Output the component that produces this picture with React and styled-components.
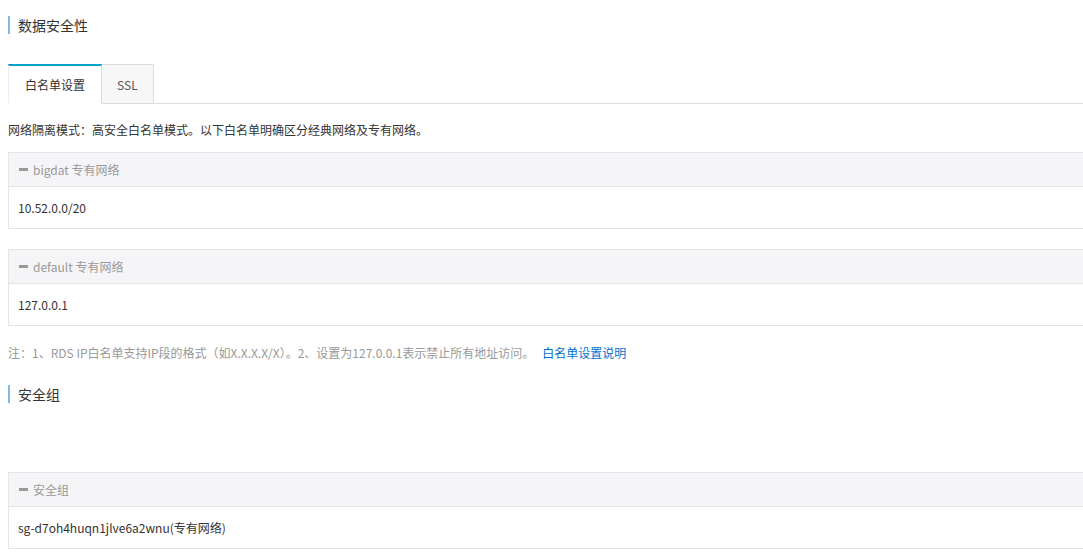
import React from 'react';
import styled, { createGlobalStyle } from 'styled-components';

const GlobalStyle = createGlobalStyle`
  html, body {
    margin: 0;
    padding: 0;
    background: #fff;
    overflow: hidden;
  }
  body {
    font-family: "Noto Sans CJK SC", "Noto Sans", sans-serif;
    font-size: 12px;
    color: #333;
  }
`;

const Page = styled.div`
  width: 1110px;
  padding: 16px 0 0 8px;
  box-sizing: border-box;
`;

const SectionTitle = styled.h3`
  margin: 0;
  font-size: 14px;
  font-weight: normal;
  line-height: 18px;
  color: #333;
  border-left: 2px solid #88b7e0;
  padding-left: 8px;
  margin-top: ${p => p.top || 0}px;
`;

const TabBar = styled.div`
  display: flex;
  margin-top: 30px;
  border-bottom: 1px solid #ddd;
  height: 39px;
`;

const Tab = styled.div`
  box-sizing: border-box;
  height: 40px;
  padding: 0 ${p => (p.active ? 16 : 15)}px;
  display: flex;
  align-items: center;
  font-size: 12px;
  color: ${p => (p.active ? '#333' : '#555')};
  background: ${p => (p.active ? '#fff' : '#f7f7f7')};
  border: 1px solid #ddd;
  border-top: ${p => (p.active ? '2px solid #00a2ca' : '1px solid #ddd')};
  border-left: ${p => (p.active ? '1px solid #eee' : 'none')};
  position: relative;
  z-index: 1;
  ${p => p.active && 'border-bottom-color: #fff;'}
`;

const Description = styled.p`
  margin: 17px 0 0;
  font-size: 12px;
  line-height: 18px;
  color: #333;
`;

const Panel = styled.div`
  margin-top: ${p => p.top}px;
  border: 1px solid #e5e5e5;
  border-right: none;
`;

const PanelHeader = styled.div`
  height: 33px;
  background: #f5f5f7;
  border-bottom: 1px solid #e5e5e5;
  display: flex;
  align-items: center;
  padding-left: 10px;
  color: #999;
  font-size: 12px;
`;

const Collapse = styled.span`
  display: inline-block;
  width: 9px;
  height: 3px;
  background: #999;
  margin-right: 5px;
`;

const PanelBody = styled.div`
  height: 41px;
  display: flex;
  align-items: center;
  padding-left: 9px;
  color: #333;
  font-size: 12px;
`;

const Note = styled.p`
  margin: 18px 0 0;
  font-size: 12px;
  line-height: 18px;
  color: #999;
`;

const Link = styled.a`
  color: #0070cc;
  text-decoration: none;
  margin-left: 8px;
`;

const GroupPanel = ({ title, value, top }) => (
  <Panel top={top}>
    <PanelHeader>
      <Collapse />
      {title}
    </PanelHeader>
    <PanelBody>{value}</PanelBody>
  </Panel>
);

export default function App() {
  return (
    <Page>
      <GlobalStyle />
      <SectionTitle>数据安全性</SectionTitle>
      <TabBar>
        <Tab active>白名单设置</Tab>
        <Tab>SSL</Tab>
      </TabBar>
      <Description>网络隔离模式：高安全白名单模式。以下白名单明确区分经典网络及专有网络。</Description>
      <GroupPanel top={13} title="bigdat 专有网络" value="10.52.0.0/20" />
      <GroupPanel top={20} title="default 专有网络" value="127.0.0.1" />
      <Note>
        注：1、RDS IP白名单支持IP段的格式（如X.X.X.X/X）。2、设置为127.0.0.1表示禁止所有地址访问。
        <Link href="#">白名单设置说明</Link>
      </Note>
      <SectionTitle top={23}>安全组</SectionTitle>
      <GroupPanel top={69} title="安全组" value="sg-d7oh4huqn1jlve6a2wnu(专有网络)" />
    </Page>
  );
}
